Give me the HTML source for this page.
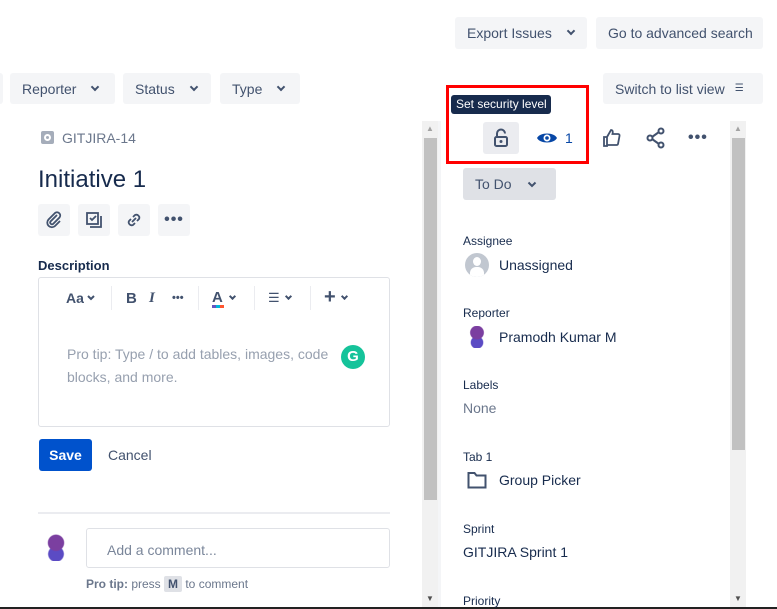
<!DOCTYPE html>
<html><head><meta charset="utf-8"><style>
*{box-sizing:border-box;margin:0;padding:0}
body{width:777px;height:609px;overflow:hidden;background:#fff;font-family:"Liberation Sans",sans-serif;color:#172b4d;position:relative;font-size:14px}
.a{position:absolute}
.btn{position:absolute;background:#f4f5f7;border-radius:3px;color:#42526e;font-size:14px;display:flex;align-items:center;padding-left:12px}
.chev{display:inline-block;width:6px;height:6px;border-right:2px solid #42526e;border-bottom:2px solid #42526e;transform:rotate(45deg);margin-left:12px;margin-top:-4px}
.ib{position:absolute;background:#f4f5f7;border-radius:3px;width:32px;height:32px;display:flex;align-items:center;justify-content:center}
.lbl{position:absolute;font-size:12px;color:#172b4d}
.val{position:absolute;font-size:14px;color:#172b4d}
</style></head><body>
<div class="btn" style="left:455px;top:17px;width:132px;height:32px">Export Issues<span class="chev" style="margin-left:16px"></span></div>
<div class="btn" style="left:596px;top:17px;width:167px;height:32px">Go to advanced search</div>

<div class="btn" style="left:-10px;top:73px;width:13px;height:31px"></div>
<div class="btn" style="left:10px;top:73px;width:105px;height:31px">Reporter<span class="chev" style="margin-left:16px"></span></div>
<div class="btn" style="left:123px;top:73px;width:88px;height:31px">Status<span class="chev" style="margin-left:16px"></span></div>
<div class="btn" style="left:220px;top:73px;width:80px;height:31px">Type<span class="chev" style="margin-left:16px"></span></div>
<div class="btn" style="left:603px;top:73px;width:160px;height:31px">Switch to list view<span style="margin-left:10px;font-size:10px">☰</span></div>

<div class="a" style="left:41px;top:131px;width:13px;height:13px;background:#a5adba;border-radius:2px"><div class="a" style="left:3px;top:3px;width:7px;height:7px;border:2px solid #fff;border-radius:50%"></div></div>
<div class="a" style="left:62px;top:130px;font-size:14px;color:#6b778c">GITJIRA-14</div>
<div class="a" style="left:38px;top:166px;font-size:24px;color:#172b4d">Initiative 1</div>

<div class="ib" style="left:38px;top:204px"><svg width="20" height="20" viewBox="0 0 20 20"><path d="M13 5l-6.5 6.5a1.8 1.8 0 0 0 2.5 2.5L15.5 7.5a3.2 3.2 0 0 0-4.5-4.5L4.5 9.5a4.6 4.6 0 0 0 6.5 6.5L16 11" fill="none" stroke="#42526e" stroke-width="1.8"/></svg></div>
<div class="ib" style="left:78px;top:204px"><svg width="20" height="20" viewBox="0 0 20 20"><rect x="3" y="3" width="11" height="11" fill="none" stroke="#42526e" stroke-width="1.8"/><path d="M6 8l2 2 4-4" fill="none" stroke="#42526e" stroke-width="1.8"/><path d="M17 6v11H6" fill="none" stroke="#42526e" stroke-width="1.8"/></svg></div>
<div class="ib" style="left:118px;top:204px"><svg width="20" height="20" viewBox="0 0 20 20"><path d="M9 7l2-2a3 3 0 0 1 4 4l-2 2M11 13l-2 2a3 3 0 0 1-4-4l2-2M8 12l4-4" fill="none" stroke="#42526e" stroke-width="1.8"/></svg></div>
<div class="ib" style="left:158px;top:204px;font-weight:bold;color:#42526e;font-size:16px;letter-spacing:1px">•••</div>

<div class="a" style="left:38px;top:258px;font-size:13px;font-weight:bold;color:#172b4d">Description</div>
<div class="a" style="left:38px;top:277px;width:352px;height:150px;border:1px solid #dfe1e6;border-radius:3px"></div>
<div class="a" style="left:66px;top:290px;font-size:14px;font-weight:bold;color:#42526e">Aa</div>
<svg class="a" style="left:87px;top:295px" width="8" height="6" viewBox="0 0 8 6"><path d="M1 1l3 3 3-3" fill="none" stroke="#42526e" stroke-width="2"/></svg>
<div class="a" style="left:111px;top:286px;width:1px;height:24px;background:#ebecf0"></div>
<div class="a" style="left:126px;top:290px;font-weight:bold;color:#42526e;font-size:15px">B</div>
<div class="a" style="left:149px;top:290px;font-style:italic;color:#42526e;font-size:15px;font-family:'Liberation Serif',serif;font-weight:bold">I</div>
<div class="a" style="left:172px;top:292px;color:#42526e;font-size:11px;font-weight:bold">•••</div>
<div class="a" style="left:198px;top:286px;width:1px;height:24px;background:#ebecf0"></div>
<div class="a" style="left:212px;top:289px;color:#42526e;font-weight:bold;font-size:15px">A</div>
<div class="a" style="left:212px;top:305px;width:12px;height:3px;background:linear-gradient(90deg,#6554c0 0 33%,#00b8d9 33% 66%,#ff5630 66%)"></div>
<div class="a" style="left:230px;top:294px;width:5px;height:5px;border-right:2px solid #42526e;border-bottom:2px solid #42526e;transform:rotate(45deg)"></div>
<div class="a" style="left:254px;top:286px;width:1px;height:24px;background:#ebecf0"></div>
<div class="a" style="left:268px;top:290px;color:#42526e;font-size:13px">☰</div>
<div class="a" style="left:286px;top:294px;width:5px;height:5px;border-right:2px solid #42526e;border-bottom:2px solid #42526e;transform:rotate(45deg)"></div>
<div class="a" style="left:310px;top:286px;width:1px;height:24px;background:#ebecf0"></div>
<div class="a" style="left:324px;top:286px;color:#42526e;font-size:20px;font-weight:bold">+</div>
<div class="a" style="left:342px;top:294px;width:5px;height:5px;border-right:2px solid #42526e;border-bottom:2px solid #42526e;transform:rotate(45deg)"></div>
<div class="a" style="left:67px;top:343px;width:270px;font-size:14px;line-height:23px;color:#97a0af">Pro tip: Type / to add tables, images, code blocks, and more.</div>
<div class="a" style="left:341px;top:345px;width:24px;height:24px;border-radius:50%;background:#15c39a;color:#fff;font-weight:bold;font-size:15px;text-align:center;line-height:24px">G</div>

<div class="a" style="left:39px;top:439px;width:53px;height:32px;background:#0052cc;border-radius:3px;color:#fff;font-weight:bold;text-align:center;line-height:32px">Save</div>
<div class="a" style="left:108px;top:447px;color:#42526e">Cancel</div>
<div class="a" style="left:38px;top:512px;width:352px;height:2px;background:#ebecf0"></div>
<div class="a" style="left:44px;top:533px;width:24px;height:28px;background:radial-gradient(circle at 50% 35%,#7b3fa0 0 35%,transparent 40%),radial-gradient(circle at 50% 75%,#5b4bc4 0 30%,transparent 35%)"></div>
<div class="a" style="left:86px;top:528px;width:304px;height:40px;border:1px solid #dfe1e6;border-radius:3px;padding:13px 20px;color:#7a869a;font-size:14px">Add a comment...</div>
<div class="a" style="left:86px;top:577px;font-size:12px;color:#6b778c"><b>Pro tip:</b> press <span style="background:#dfe1e6;padding:1px 4px;border-radius:2px;font-weight:bold;color:#42526e">M</span> to comment</div>

<div class="a" style="left:422px;top:121px;width:16px;height:488px;background:#f1f1f1"></div>
<div class="a" style="left:424px;top:138px;width:13px;height:362px;background:#c1c1c1"></div>
<div class="a" style="left:426px;top:124px;font-size:8px;color:#a3a3a3">▲</div>
<div class="a" style="left:426px;top:594px;font-size:8px;color:#505050">▼</div>
<div class="a" style="left:438px;top:121px;width:3px;height:488px;background:#f4f5f7"></div>
<div class="a" style="left:730px;top:121px;width:16px;height:488px;background:#f1f1f1"></div>
<div class="a" style="left:732px;top:138px;width:13px;height:312px;background:#c1c1c1"></div>
<div class="a" style="left:734px;top:124px;font-size:8px;color:#a3a3a3">▲</div>
<div class="a" style="left:734px;top:594px;font-size:8px;color:#505050">▼</div>
<div class="a" style="left:0;top:607px;width:777px;height:2px;background:#222"></div>

<div class="a" style="left:446px;top:85px;width:143px;height:79px;border:3px solid #f00"></div>
<div class="a" style="left:451px;top:95px;width:100px;height:19px;background:#172b4d;border-radius:3px;color:#fff;font-size:12px;line-height:19px;padding-left:5px">Set security level</div>
<div class="ib" style="left:483px;top:122px;width:36px;height:32px;background:#ebecf0"><svg width="18" height="20" viewBox="0 0 18 20"><path d="M5 9V5.5a4 4 0 0 1 8 0" fill="none" stroke="#42526e" stroke-width="2"/><rect x="3" y="9" width="12" height="9" rx="1.5" fill="none" stroke="#42526e" stroke-width="2"/><circle cx="9" cy="13.5" r="1.5" fill="#42526e"/></svg></div>
<svg class="a" style="left:536px;top:130px" width="22" height="16" viewBox="0 0 22 16"><path d="M1 8C4 2 18 2 21 8C18 14 4 14 1 8z" fill="#0747a6"/><circle cx="11" cy="8" r="3.5" fill="#fff"/><circle cx="11" cy="8" r="1.8" fill="#0747a6"/></svg>
<div class="a" style="left:565px;top:130px;color:#0747a6;font-size:14px">1</div>
<svg class="a" style="left:602px;top:128px" width="20" height="20" viewBox="0 0 20 20"><path d="M2 9h3v9H2zM5 9l4-7c2 0 2 2 1.5 4H16a1.5 1.5 0 0 1 1.5 2l-1.5 8a1.5 1.5 0 0 1-1.5 1H5" fill="none" stroke="#42526e" stroke-width="1.8"/></svg>
<svg class="a" style="left:645px;top:127px" width="22" height="22" viewBox="0 0 22 22"><circle cx="16" cy="4" r="2.5" fill="none" stroke="#42526e" stroke-width="2"/><circle cx="5" cy="11" r="2.5" fill="none" stroke="#42526e" stroke-width="2"/><circle cx="16" cy="18" r="2.5" fill="none" stroke="#42526e" stroke-width="2"/><path d="M7 10l7-5M7 12l7 5" stroke="#42526e" stroke-width="2"/></svg>
<div class="a" style="left:688px;top:129px;font-weight:bold;color:#42526e;font-size:16px;letter-spacing:1px">•••</div>

<div class="a" style="left:463px;top:168px;width:93px;height:32px;background:#dfe1e6;border-radius:3px;color:#42526e;padding:8px 12px;font-size:14px">To Do</div>
<svg class="a" style="left:527px;top:181px" width="10" height="7" viewBox="0 0 10 7"><path d="M1.5 1.5l3.5 3.5 3.5-3.5" fill="none" stroke="#42526e" stroke-width="2"/></svg>

<div class="lbl" style="left:463px;top:234px">Assignee</div>
<div class="a" style="left:465px;top:253px;width:24px;height:24px;border-radius:50%;background:#c1c7d0;overflow:hidden"><div class="a" style="left:8px;top:4px;width:8px;height:9px;border-radius:50%;background:#fff"></div><div class="a" style="left:5px;top:14px;width:14px;height:10px;border-radius:6px 6px 0 0;background:#fff"></div></div>
<div class="val" style="left:499px;top:257px">Unassigned</div>

<div class="lbl" style="left:463px;top:306px">Reporter</div>
<div class="a" style="left:467px;top:326px;width:20px;height:22px;background:radial-gradient(circle at 50% 30%,#7b3fa0 0 35%,transparent 40%),radial-gradient(circle at 50% 75%,#5b4bc4 0 30%,transparent 35%)"></div>
<div class="val" style="left:499px;top:329px">Pramodh Kumar M</div>

<div class="lbl" style="left:463px;top:378px">Labels</div>
<div class="val" style="left:463px;top:400px;color:#6b778c">None</div>

<div class="lbl" style="left:463px;top:450px">Tab 1</div>
<svg class="a" style="left:467px;top:470px" width="20" height="20" viewBox="0 0 20 20"><path d="M1.5 3h6l2 2.5h9v12h-17z" fill="none" stroke="#42526e" stroke-width="2"/></svg>
<div class="val" style="left:499px;top:472px">Group Picker</div>

<div class="lbl" style="left:463px;top:522px">Sprint</div>
<div class="val" style="left:463px;top:544px">GITJIRA Sprint 1</div>

<div class="lbl" style="left:463px;top:594px">Priority</div>
</body></html>
